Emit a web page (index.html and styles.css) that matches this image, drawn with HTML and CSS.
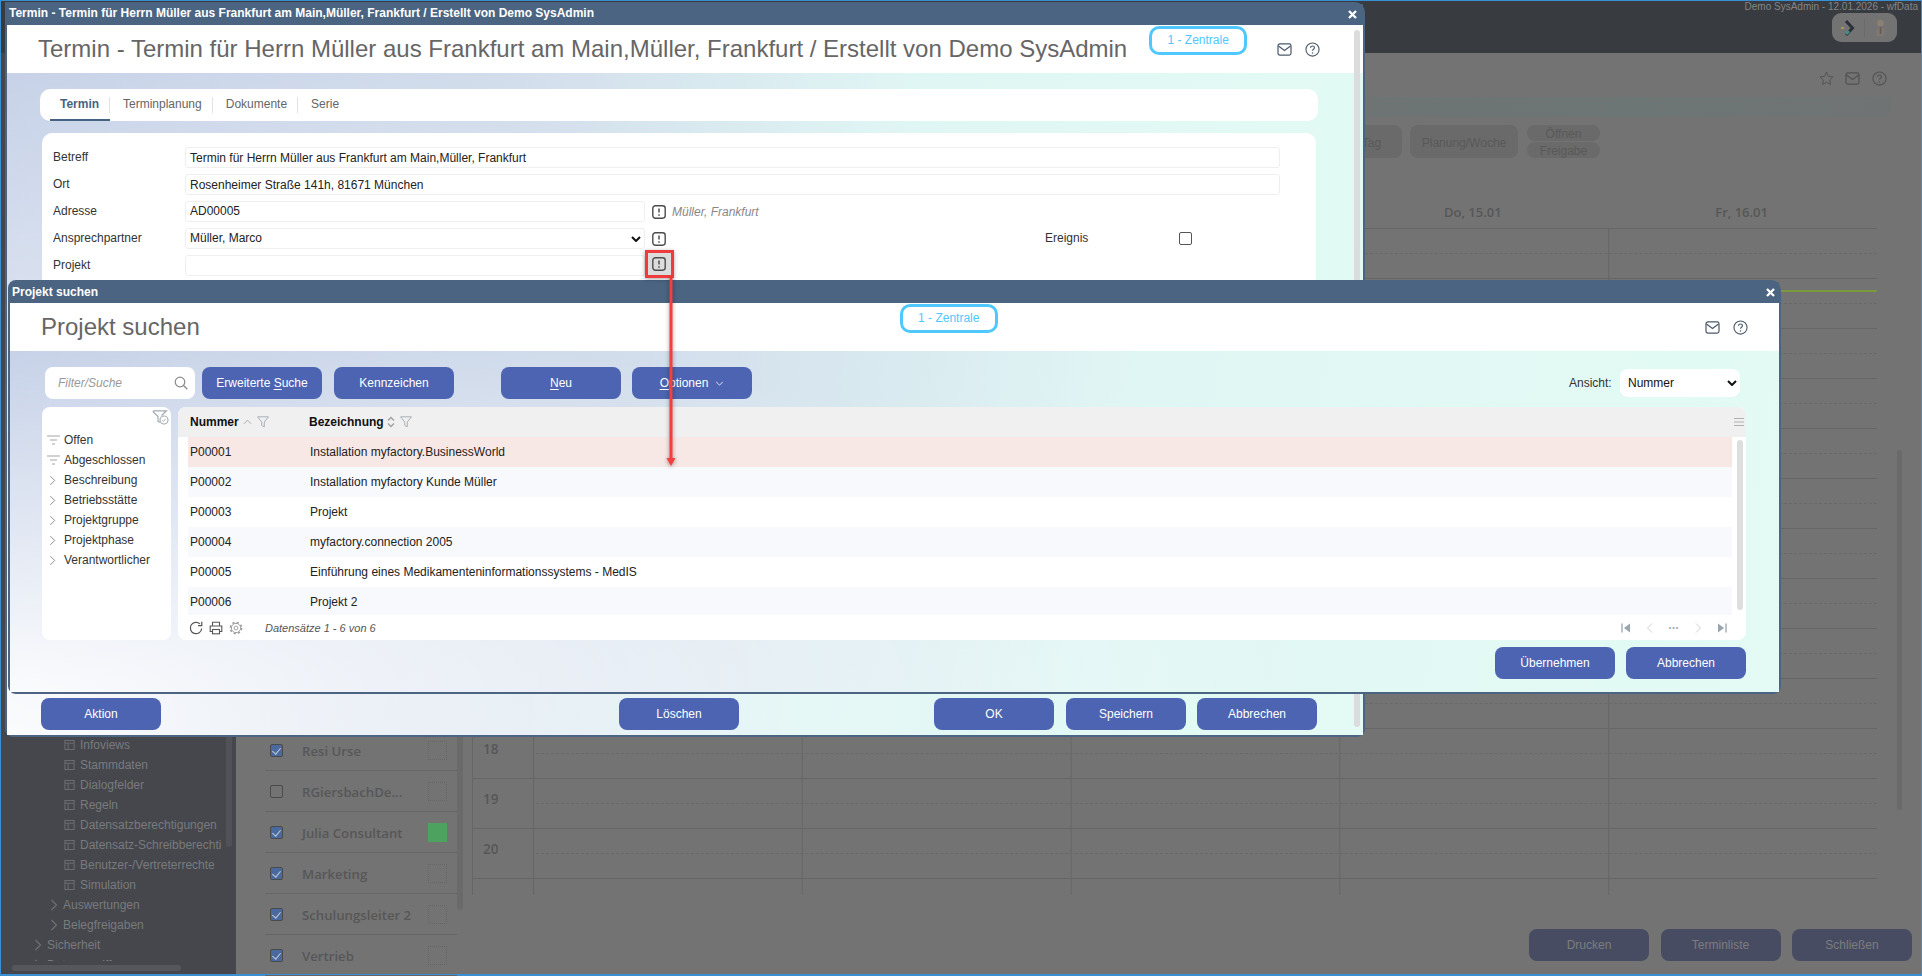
FILE: index.html
```html
<!DOCTYPE html>
<html lang="de">
<head>
<meta charset="utf-8">
<title>Termin</title>
<link rel="stylesheet" href="styles.css">
</head>
<body>
<svg class="sprite" width="0" height="0" aria-hidden="true">
  <symbol id="i-mail" viewBox="0 0 16 14"><rect x="1" y="1" width="14" height="12" rx="2" fill="none" stroke="currentColor" stroke-width="1.3"/><path d="M1.5 3.2 8 8l6.5-4.8" fill="none" stroke="currentColor" stroke-width="1.3"/></symbol>
  <symbol id="i-help" viewBox="0 0 16 16"><circle cx="8" cy="8" r="7" fill="none" stroke="currentColor" stroke-width="1.2"/><path d="M5.9 6.2c0-1.2 1-2 2.1-2s2.1.8 2.1 1.9c0 1.6-2.1 1.7-2.1 3.3" fill="none" stroke="currentColor" stroke-width="1.2"/><circle cx="8" cy="11.6" r=".8" fill="currentColor"/></symbol>
  <symbol id="i-pick" viewBox="0 0 14 14"><rect x=".8" y=".8" width="12.4" height="12.4" rx="2.6" fill="none" stroke="currentColor" stroke-width="1.4"/><path d="M7 3.4v4.2M7 9.2v1.5" stroke="currentColor" stroke-width="1.5"/></symbol>
  <symbol id="i-lines" viewBox="0 0 13 10"><path d="M0 1h13M3 5h7M5 9h3" stroke="currentColor" stroke-width="1.5" fill="none"/></symbol>
  <symbol id="i-chev" viewBox="0 0 8 12"><path d="M1.5 1 6.5 6l-5 5" fill="none" stroke="currentColor" stroke-width="1.1"/></symbol>
  <symbol id="i-funnel" viewBox="0 0 12 12"><path d="M.6.8h10.8L7.3 6v4.8L4.7 9.4V6z" fill="none" stroke="currentColor" stroke-width=".9"/></symbol>
  <symbol id="i-table" viewBox="0 0 12 12"><rect x="1" y="1" width="10" height="10" fill="none" stroke="currentColor"/><path d="M1 4h10M4.5 4v7" stroke="currentColor" fill="none"/></symbol>
  <symbol id="i-close" viewBox="0 0 9 9"><path d="M1 1l7 7M8 1l-7 7" stroke="currentColor" stroke-width="2.3" fill="none"/></symbol>
</svg>

<div class="app">
  <header class="topbar">
    <div class="session">Demo SysAdmin - 12.01.2026 - wfData</div>
    <div class="widget">
      <svg class="widget-logo" viewBox="0 0 20 20"><path d="M7 3l6.5 7L7 17" fill="none" stroke="#2c3036" stroke-width="3"/><path d="M2 10h3" stroke="#a89a3a" stroke-width="2"/><path d="M7 16l3-3" stroke="#3f8f8a" stroke-width="3"/></svg>
      <span class="widget-sep"></span>
      <svg class="widget-user" viewBox="0 0 16 24"><circle cx="8" cy="6" r="4" fill="#8c8073"/><path d="M3 22v-7c0-3 2-4 5-4s5 1 5 4v7z" fill="#7f7872"/><path d="M7 11h2v8H7z" fill="#655a55"/></svg>
    </div>
  </header>

  <div class="main">
    <aside class="sidebar">
      <div class="tree">
        <div class="tree-item lvl3"><svg class="tree-ico"><use href="#i-table"/></svg>Infoviews</div>
        <div class="tree-item lvl3"><svg class="tree-ico"><use href="#i-table"/></svg>Stammdaten</div>
        <div class="tree-item lvl3"><svg class="tree-ico"><use href="#i-table"/></svg>Dialogfelder</div>
        <div class="tree-item lvl3"><svg class="tree-ico"><use href="#i-table"/></svg>Regeln</div>
        <div class="tree-item lvl3"><svg class="tree-ico"><use href="#i-table"/></svg>Datensatzberechtigungen</div>
        <div class="tree-item lvl3"><svg class="tree-ico"><use href="#i-table"/></svg>Datensatz-Schreibberechtigungen</div>
        <div class="tree-item lvl3"><svg class="tree-ico"><use href="#i-table"/></svg>Benutzer-/Vertreterrechte</div>
        <div class="tree-item lvl3"><svg class="tree-ico"><use href="#i-table"/></svg>Simulation</div>
        <div class="tree-item lvl2"><svg class="tree-chev"><use href="#i-chev"/></svg>Auswertungen</div>
        <div class="tree-item lvl2"><svg class="tree-chev"><use href="#i-chev"/></svg>Belegfreigaben</div>
        <div class="tree-item lvl1"><svg class="tree-chev"><use href="#i-chev"/></svg>Sicherheit</div>
        <div class="tree-item lvl1"><svg class="tree-chev"><use href="#i-chev"/></svg>Datenzugriff</div>
      </div>
      <div class="sb-v"></div>
      <div class="sb-h"><span></span></div>
    </aside>

    <section class="content">
      <div class="page-icons">
        <svg class="pi-star" viewBox="0 0 16 16"><path d="M8 1.2l2.1 4.5 4.8.6-3.5 3.3.9 4.8L8 12.1l-4.3 2.3.9-4.8L1.1 6.3l4.8-.6z" fill="none" stroke="currentColor"/></svg>
        <svg class="pi-mail"><use href="#i-mail"/></svg>
        <svg class="pi-help"><use href="#i-help"/></svg>
      </div>
      <div class="strip"></div>
      <div class="tools">
        <button class="tool t-tag">Tag</button>
        <button class="tool t-plan">Planung/Woche</button>
        <div class="tool-stack">
          <button class="tool small">Öffnen</button>
          <button class="tool small">Freigabe</button>
        </div>
      </div>
      <div class="days">
        <div class="day">Do, 15.01</div>
        <div class="day">Fr, 16.01</div>
      </div>
      <div class="planner">
        <div class="people">
          <div class="person"><span class="chk on"></span><span class="pname">Resi Urse</span><span class="swatch"></span></div>
          <div class="person"><span class="chk"></span><span class="pname">RGiersbachDe...</span><span class="swatch"></span></div>
          <div class="person"><span class="chk on"></span><span class="pname">Julia Consultant</span><span class="swatch green"></span></div>
          <div class="person"><span class="chk on"></span><span class="pname">Marketing</span><span class="swatch"></span></div>
          <div class="person"><span class="chk on"></span><span class="pname">Schulungsleiter 2</span><span class="swatch"></span></div>
          <div class="person"><span class="chk on"></span><span class="pname">Vertrieb</span><span class="swatch"></span></div>
        </div>
        <div class="people-sb"></div>
        <div class="cal">
          <div class="now"></div>
          <div class="hr"></div><div class="hr"></div><div class="hr"></div><div class="hr"></div><div class="hr"></div>
          <div class="hr"></div><div class="hr"></div><div class="hr"></div><div class="hr"></div><div class="hr"></div>
          <div class="hr"><span>18</span></div><div class="hr"><span>19</span></div><div class="hr"><span>20</span></div>
        </div>
        <div class="cal-sb"></div>
      </div>
      <div class="page-actions">
        <button class="page-btn">Drucken</button>
        <button class="page-btn">Terminliste</button>
        <button class="page-btn">Schließen</button>
      </div>
    </section>
  </div>
</div>

<!-- Termin dialog -->
<div class="dlg dlg-termin">
  <div class="dlg-title"><span>Termin - Termin für Herrn Müller aus Frankfurt am Main,Müller, Frankfurt / Erstellt von Demo SysAdmin</span><svg class="dlg-x"><use href="#i-close"/></svg></div>
  <div class="dlg-head">
    <h1>Termin - Termin für Herrn Müller aus Frankfurt am Main,Müller, Frankfurt / Erstellt von Demo SysAdmin</h1>
    <div class="badge">1 - Zentrale</div>
    <div class="head-icons"><svg class="hi-mail"><use href="#i-mail"/></svg><svg class="hi-help"><use href="#i-help"/></svg></div>
  </div>
  <div class="dlg-body">
    <nav class="tabs">
      <a class="tab active">Termin</a>
      <a class="tab">Terminplanung</a>
      <a class="tab">Dokumente</a>
      <a class="tab last">Serie</a>
    </nav>
    <div class="form">
      <div class="row"><label>Betreff</label><div class="field wide">Termin für Herrn Müller aus Frankfurt am Main,Müller, Frankfurt</div></div>
      <div class="row"><label>Ort</label><div class="field wide">Rosenheimer Straße 141h, 81671 München</div></div>
      <div class="row"><label>Adresse</label><div class="field">AD00005</div><svg class="pick"><use href="#i-pick"/></svg><em class="hint">Müller, Frankfurt</em></div>
      <div class="row"><label>Ansprechpartner</label><div class="field sel">Müller, Marco<svg class="sel-arrow" viewBox="0 0 10 6"><path d="M1 1l4 4 4-4" fill="none" stroke="#111" stroke-width="2"/></svg></div><svg class="pick"><use href="#i-pick"/></svg><span class="ev-label">Ereignis</span><span class="ev-check"></span></div>
      <div class="row"><label>Projekt</label><div class="field"></div><svg class="pick"><use href="#i-pick"/></svg></div>
    </div>
    <div class="dlg-actions">
      <button class="btn">Aktion</button>
      <button class="btn a-del">Löschen</button>
      <button class="btn a-ok">OK</button>
      <button class="btn a-save">Speichern</button>
      <button class="btn">Abbrechen</button>
    </div>
  </div>
  <div class="dlg-scroll"></div>
</div>

<!-- Projekt suchen dialog -->
<div class="dlg dlg-projekt">
  <div class="dlg-title"><span>Projekt suchen</span><svg class="dlg-x"><use href="#i-close"/></svg></div>
  <div class="dlg-head">
    <h1>Projekt suchen</h1>
    <div class="badge">1 - Zentrale</div>
    <div class="head-icons"><svg class="hi-mail"><use href="#i-mail"/></svg><svg class="hi-help"><use href="#i-help"/></svg></div>
  </div>
  <div class="dlg-body">
    <div class="toolbar">
      <div class="search"><em>Filter/Suche</em><svg viewBox="0 0 14 14"><circle cx="6" cy="6" r="4.8" fill="none" stroke="currentColor" stroke-width="1.2"/><path d="M9.5 9.5l3.8 3.8" stroke="currentColor" stroke-width="1.3"/></svg></div>
      <button class="btn">Erweiterte <u>S</u>uche</button>
      <button class="btn b-kenn">Kennzeichen</button>
      <button class="btn b-neu"><u>N</u>eu</button>
      <button class="btn b-opt"><u>O</u>ptionen<svg class="opt-chev" viewBox="0 0 10 6"><path d="M1 1l4 4 4-4" fill="none" stroke="currentColor"/></svg></button>
      <label class="view-label">Ansicht:</label>
      <div class="view-select">Nummer<svg viewBox="0 0 10 6"><path d="M1 1l4 4 4-4" fill="none" stroke="#111" stroke-width="2"/></svg></div>
    </div>
    <div class="panels">
      <div class="facets">
        <svg class="facet-top" viewBox="0 0 17 15"><path d="M1.5.8h13l-5 4.7M1.5.8c-.6.6-.4 1 .1 1.5L6 6.500v4.700l1.800 1.200" fill="none" stroke="#a2abb3" stroke-width="1.2"/><circle cx="12" cy="10" r="4" fill="none" stroke="#a2abb3" stroke-width="1.1"/><path d="M10.200 10.300l1.300 1.200 2.200-2.700" fill="none" stroke="#a2abb3" stroke-width=".9"/></svg>
        <div class="facet"><svg class="f-lines"><use href="#i-lines"/></svg>Offen</div>
        <div class="facet"><svg class="f-lines"><use href="#i-lines"/></svg>Abgeschlossen</div>
        <div class="facet"><svg class="f-chev"><use href="#i-chev"/></svg>Beschreibung</div>
        <div class="facet"><svg class="f-chev"><use href="#i-chev"/></svg>Betriebsstätte</div>
        <div class="facet"><svg class="f-chev"><use href="#i-chev"/></svg>Projektgruppe</div>
        <div class="facet"><svg class="f-chev"><use href="#i-chev"/></svg>Projektphase</div>
        <div class="facet"><svg class="f-chev"><use href="#i-chev"/></svg>Verantwortlicher</div>
      </div>
      <div class="grid">
        <div class="grid-head">
          <div class="gh gh-num">Nummer<svg class="sort" viewBox="0 0 10 6"><path d="M1 5l4-4 4 4" fill="none" stroke="currentColor"/></svg><svg class="gh-f"><use href="#i-funnel"/></svg></div>
          <div class="gh">Bezeichnung<svg class="sort2" viewBox="0 0 8 12"><path d="M1 4.5 4 1.5l3 3M1 7.5l3 3 3-3" fill="none" stroke="currentColor" stroke-width="1.3"/></svg><svg class="gh-f"><use href="#i-funnel"/></svg></div>
          <svg class="gh-menu" viewBox="0 0 10 8"><path d="M0 .5h10M0 4h10M0 7.5h10" stroke="currentColor" fill="none"/></svg>
        </div>
        <div class="grid-body">
          <div class="rows">
            <div class="gr sel"><span>P00001</span><span>Installation myfactory.BusinessWorld</span></div>
            <div class="gr alt"><span>P00002</span><span>Installation myfactory Kunde Müller</span></div>
            <div class="gr"><span>P00003</span><span>Projekt</span></div>
            <div class="gr alt"><span>P00004</span><span>myfactory.connection 2005</span></div>
            <div class="gr"><span>P00005</span><span>Einführung eines Medikamenteninformationssystems - MedIS</span></div>
            <div class="gr alt last"><span>P00006</span><span>Projekt 2</span></div>
          </div>
          <div class="grid-sb"><span></span></div>
        </div>
        <div class="grid-foot">
          <svg class="gf" viewBox="0 0 14 14"><path d="M12.7 7.5a5.7 5.7 0 1 1-1.700-4.600" fill="none" stroke="currentColor" stroke-width="1.2"/><path d="M12.8.8v3.800H9" fill="none" stroke="currentColor" stroke-width="1.2"/></svg>
          <svg class="gf" viewBox="0 0 14 14"><path d="M3.5 5V1.200h7V5M3.500 10.500H1.200V5h11.600v5.500h-2.300" fill="none" stroke="currentColor" stroke-width="1.1"/><rect x="3.5" y="8.500" width="7" height="4.300" fill="none" stroke="currentColor" stroke-width="1.1"/></svg>
          <svg class="gf lite" viewBox="0 0 14 14"><circle cx="7" cy="7" r="5.600" fill="none" stroke="currentColor" stroke-width="1.5" stroke-dasharray="2.200 2.200"/><circle cx="7" cy="7" r="4.600" fill="none" stroke="currentColor" stroke-width=".9"/><circle cx="7" cy="7" r="1.900" fill="none" stroke="currentColor" stroke-width=".9"/></svg>
          <em class="gf-count">Datensätze 1 - 6 von 6</em>
          <div class="pager">
            <svg viewBox="0 0 10 10"><path d="M1 .5v9" stroke="currentColor" stroke-width="1.3"/><path d="M9 .5v9L3 5z" fill="currentColor"/></svg>
            <svg class="pg-light" viewBox="0 0 10 10"><path d="M7 .5 2.500 5 7 9.500" fill="none" stroke="currentColor"/></svg>
            <span>•••</span>
            <svg class="pg-light" viewBox="0 0 10 10"><path d="M3 .5 7.500 5 3 9.500" fill="none" stroke="currentColor"/></svg>
            <svg viewBox="0 0 10 10"><path d="M9 .5v9" stroke="currentColor" stroke-width="1.3"/><path d="M1 .5v9L7 5z" fill="currentColor"/></svg>
          </div>
        </div>
      </div>
    </div>
    <div class="dlg-actions right">
      <button class="btn">Übernehmen</button>
      <button class="btn">Abbrechen</button>
    </div>
  </div>
</div>

<!-- Annotation drawn over the screenshot -->
<div class="mark-box"><svg class="pick"><use href="#i-pick"/></svg></div>
<svg class="mark-arrow" viewBox="0 0 16 192"><path d="M8 0v184" stroke="#f43f3f" stroke-width="3" fill="none"/><path d="M3.500 180h9L8 188z" fill="#f43f3f"/></svg>
</body>
</html>
```

FILE: styles.css
```css
* { box-sizing: border-box; }
html, body { margin: 0; padding: 0; }
body {
  position: relative;
  width: 1922px;
  height: 976px;
  overflow: hidden;
  font-family: "Liberation Sans", Arial, sans-serif;
  font-size: 12px;
  background: #737373;
  color: #222;
}
button { font-family: inherit; border: 0; padding: 0; }
.sprite { position: absolute; }

/* Background application (dimmed) */
.app {
  height: 976px;
  display: flex;
  flex-direction: column;
  border: 1px solid #3a8fd3;
  border-width: 1px 1px 2px;
}
.topbar {
  height: 52px;
  flex: none;
  background: #383b40;
  display: flex;
  flex-direction: column;
  align-items: flex-end;
  padding: 0 3px 0 0;
}
.session { color: #858585; font-size: 10px; line-height: 12px; }
.widget {
  width: 65px;
  height: 29px;
  margin: 0 21px 0 0;
  border-radius: 9px;
  background: #737373;
  display: flex;
  align-items: center;
  padding-left: 7px;
}
.widget-logo { width: 20px; height: 20px; }
.widget-sep { width: 1px; height: 20px; background: #6c6c6c; margin: 0 8px 0 5px; }
.widget-user { width: 15px; height: 20px; }
.main { flex: 1; display: flex; min-height: 0; }
.sidebar {
  width: 235px;
  flex: none;
  background: #45474c;
  display: flex;
  flex-direction: column;
  justify-content: flex-end;
  position: relative;
  overflow: hidden;
}
.tree { height: 240px; flex: none; margin-bottom: -1px; overflow: hidden; color: #797a7d; font-size: 12px; }
.tree-item { height: 20px; line-height: 20px; white-space: nowrap; display: flex; align-items: center; overflow: hidden; }
.lvl3 { padding-left: 63px; width: 221px; }
.lvl2 { padding-left: 49px; }
.lvl1 { padding-left: 33px; }
.tree-ico { width: 11px; height: 12px; margin-right: 5px; flex: none; color: #707174; }
.tree-chev { width: 8px; height: 12px; margin-right: 5px; flex: none; color: #707174; }
.sb-v { position: absolute; left: 225px; top: 0; bottom: 127px; width: 6px; background: #505257; border-radius: 3px; }
.sb-h { position: absolute; left: 0; right: 0; bottom: 0; height: 13px; background: #45474c; padding: 4px 0 0 11px; }
.sb-h span { display: block; width: 169px; height: 6px; background: #55575c; border-radius: 3px; }

.content { flex: 1; min-width: 0; display: flex; flex-direction: column; position: relative; color: #5a5a5a; }
.page-icons { height: 44px; flex: none; display: flex; justify-content: flex-end; align-items: center; padding: 6px 34px 0 0; color: #525252; }
.pi-star { width: 15px; height: 15px; margin-right: 11px; }
.pi-mail { width: 15px; height: 13px; margin-right: 12px; }
.pi-help { width: 15px; height: 15px; }
.strip { height: 20px; flex: none; margin: 0 30px 0 0; background: linear-gradient(90deg, #727272 0%, #6f7272 50%, #6c7675 85%, #707373 100%); }
.tools { flex: none; display: flex; margin: 8px 0 0 1105px; gap: 8px; height: 33px; }
.tool { background: #6a6a6a; color: #595959; border-radius: 8px; font-size: 12px; padding-top: 2px; }
.t-tag { width: 61px; }
.t-plan { width: 108px; }
.tool-stack { display: flex; flex-direction: column; justify-content: space-between; width: 73px; margin-left: 1px; }
.tool.small { height: 16px; border-radius: 8px; font-size: 12px; line-height: 16px; padding-top: 1px; }
.days { flex: none; display: flex; justify-content: flex-end; height: 70px; padding-right: 45px; font-size: 13px; font-family: "Open Sans", sans-serif; font-weight: 600; color: #575757; }
.day { width: 268.8px; padding-top: 45px; text-align: center; }
.planner { flex: 1; min-height: 0; display: flex; padding-left: 29px; position: relative; }
.people { width: 192px; flex: none; padding-top: 502px; }
.person { height: 41px; border-bottom: 1px solid #666; display: flex; align-items: center; padding-left: 5px; }
.chk { width: 13px; height: 13px; border: 1px solid #4a4a4a; border-radius: 2px; flex: none; }
.chk.on { background: #4a6a9f; position: relative; }
.chk.on::after { content: ""; position: absolute; left: 3px; top: 1px; width: 4px; height: 7px; border: solid #c4cad8; border-width: 0 1.5px 1.5px 0; transform: rotate(40deg); }
.pname { flex: 1; margin-left: 19px; padding-top: 1px; font-family: "Open Sans", sans-serif; font-weight: 600; font-size: 13.2px; color: #575757; white-space: nowrap; }
.swatch { width: 19px; height: 19px; margin-right: 10px; border: 1px dotted #666; flex: none; }
.swatch.green { background: #4ea260; border-color: #4ea260; }
.people-sb { width: 6px; flex: none; height: 682px; background: #6a6a6a; border-radius: 3px; }
.cal {
  width: 1405px;
  height: 667px;
  flex: none;
  margin-left: 9px;
  border-left: 1px solid #666;
  border-top: 1px solid #666;
  position: relative;
  overflow: hidden;
  background-image: linear-gradient(to right, #666 1px, transparent 1px);
  background-size: 268.8px 100%;
  background-position: 60px 0;
}
.hr { height: 50px; border-bottom: 1px solid #666; position: relative; font-family: "Open Sans", sans-serif; font-weight: 600; font-size: 13.5px; color: #575757; padding: 11px 0 0 10px; }
.hr::after { content: ""; position: absolute; left: 63px; right: 0; top: 24px; border-top: 1px dashed #696969; }
.now { position: absolute; left: 1134px; right: 0; top: 61px; height: 2px; background: #7a993d; }
.cal-sb { position: absolute; left: 1661px; top: 222px; width: 5px; height: 360px; background: #6a6a6a; border-radius: 3px; }
.page-actions { position: absolute; right: 9px; bottom: 13px; display: flex; gap: 11.5px; }
.page-btn { width: 120px; height: 32px; border-radius: 8px; background: #474c63; color: #7d7d7d; font-size: 12px; }

/* Dialogs */
.dlg {
  position: absolute;
  display: flex;
  flex-direction: column;
  border: 2px solid #4a6482;
  border-radius: 0 10px 8px 8px;
  background: #fff;
}
.dlg-termin { left: 5px; top: 2px; width: 1360px; height: 735px; }
.dlg-projekt { left: 8px; top: 280px; width: 1773px; height: 414px; border-radius: 8px 10px 8px 8px; }
.dlg-title {
  height: 21px;
  flex: none;
  background: #4a6482;
  color: #fff;
  font-weight: 700;
  font-size: 12px;
  line-height: 19px;
  display: flex;
  justify-content: space-between;
  align-items: flex-start;
  padding: 0 2px;
}
.dlg-projekt .dlg-title { line-height: 21px; }
.dlg-x { width: 9px; height: 9px; margin: 6px 4px 0 0; color: #fff; flex: none; }
.dlg-projekt .dlg-x { margin: 6px 2px 0 0; }
.dlg-head { height: 48px; flex: none; display: flex; background: #fff; }
.dlg-head h1 { margin: 0; font-weight: 400; font-size: 24px; line-height: 48px; color: #666; white-space: nowrap; padding-left: 31px; }
.badge {
  width: 98px;
  height: 29px;
  margin-top: 1px;
  border: 3px solid #4fc8ff;
  border-radius: 10px;
  color: #4fc8ff;
  font-size: 12px;
  line-height: 23px;
  text-align: center;
}
.dlg-termin .badge { margin-left: 22px; }
.dlg-projekt .badge { margin-left: 700px; }
.head-icons { margin-left: auto; display: flex; align-items: center; color: #4a5a6a; gap: 13px; }
.dlg-termin .head-icons { padding-right: 43px; }
.dlg-projekt .head-icons { padding-right: 31px; }
.hi-mail { width: 15px; height: 13px; }
.hi-help { width: 15px; height: 15px; }
.dlg-body {
  flex: 1;
  min-height: 0;
  display: flex;
  flex-direction: column;
  background:
    radial-gradient(ellipse 75% 110% at 0% 100%, rgba(255,255,255,.92), rgba(255,255,255,.45) 50%, rgba(255,255,255,0) 100%),
    linear-gradient(100deg, #c2cee6 0%, #d3deec 35%, #e0f6f4 62%, #e3fbf4 100%);
}
.btn {
  width: 120px;
  height: 32px;
  flex: none;
  border-radius: 8px;
  background: #4c64b1;
  color: #fff;
  font-size: 12px;
  text-align: center;
}
.btn u { text-underline-offset: 2px; }

/* Termin dialog body */
.dlg-termin .dlg-body { padding: 16px 45px 5px 33px; }
.tabs { height: 32px; flex: none; background: #fff; border-radius: 10px; display: flex; align-items: center; padding-left: 10px; color: #666; }
.tab { height: 32px; line-height: 30px; padding: 0 11px 0 13px; position: relative; }
.tab::after { content: ""; position: absolute; right: 0; top: 8px; height: 16px; width: 1px; background: #e3e3e3; }
.tab.last::after { display: none; }
.tab.active { color: #466482; font-weight: 700; padding: 0 10px; width: 60px; border-bottom: 2px solid #466482; }
.form { flex: 1; min-height: 0; margin: 12px 2px 11px; padding: 14px 11px 0; background: #fff; border-radius: 10px; }
.row { height: 21px; margin-bottom: 6px; display: flex; align-items: center; }
.row label { width: 132px; flex: none; color: #333; padding-bottom: 2px; }
.field { width: 460px; height: 21px; flex: none; border: 1px solid #efefef; border-radius: 3px; line-height: 19px; padding-left: 4px; color: #222; background: #fff; position: relative; }
.field.wide { width: 1095px; line-height: 20px; }
.sel-arrow { position: absolute; right: 3px; top: 7px; width: 10px; height: 6px; }
.pick { width: 14px; height: 14px; color: #4c4c4c; margin-left: 7px; flex: none; }
.hint { margin-left: 6px; color: #888; }
.ev-label { margin-left: 379px; width: 134px; color: #333; padding-bottom: 2px; }
.ev-check { width: 13px; height: 13px; border: 1px solid #555; border-radius: 2px; }
.dlg-actions { display: flex; flex: none; height: 32px; gap: 11px; margin-left: 1px; }
.a-del { margin-left: 447px; }
.a-ok { margin-left: 184px; }
.a-save { margin-left: 1px; }
.dlg-scroll { position: absolute; right: 3px; top: 26px; height: 697px; width: 6px; background: #dcdcdc; border-radius: 3px; }

/* Projekt dialog body */
.dlg-projekt .dlg-body { padding: 16px 33px 0 32px; }
.toolbar { height: 32px; flex: none; display: flex; align-items: center; margin-left: 3px; }
.search { width: 150px; height: 32px; background: #fff; border-radius: 8px; display: flex; align-items: center; justify-content: space-between; padding: 0 7px 0 13px; color: #999; }
.search svg { width: 14px; height: 14px; color: #8a8a8a; }
.toolbar .btn:first-of-type { margin-left: 7px; }
.b-kenn { margin-left: 12px; }
.b-neu { margin-left: 47px; }
.b-opt { margin-left: 11px; }
.opt-chev { width: 9px; height: 5px; margin-left: 7px; vertical-align: 1px; }
.view-label { margin-left: auto; color: #333; width: 51px; }
.view-select { width: 120px; height: 28px; margin-right: 6px; background: #fff; border-radius: 8px; display: flex; justify-content: space-between; align-items: center; padding: 0 3px 0 8px; color: #111; }
.view-select svg { width: 10px; height: 6px; }
.panels { height: 233px; flex: none; margin-top: 8px; display: flex; gap: 7px; }
.facets { width: 129px; flex: none; background: #fff; border-radius: 8px; padding-top: 23px; position: relative; }
.facet-top { position: absolute; right: 2px; top: 3px; width: 17px; height: 15px; }
.facet { height: 20px; display: flex; align-items: center; padding-left: 5px; color: #333; }
.f-lines { width: 13px; height: 10px; margin-right: 4px; color: #c4c4c4; flex: none; }
.f-chev { width: 7px; height: 11px; margin: 0 8px 0 2px; color: #8a8a8a; flex: none; }
.grid { flex: 1; min-width: 0; background: #fff; border-radius: 8px; display: flex; flex-direction: column; overflow: hidden; }
.grid-head { height: 30px; flex: none; background: #f0f0f0; display: flex; align-items: center; padding-left: 12px; color: #111; font-weight: 700; position: relative; }
.gh { display: flex; align-items: center; }
.gh-num { width: 119px; }
.sort { width: 9px; height: 6px; margin-left: 4px; color: #a4a4a4; }
.sort2 { width: 8px; height: 12px; margin-left: 3px; color: #a0a0a0; }
.gh-f { width: 12px; height: 12px; margin-left: 5px; color: #a0a9b0; }
.gh-menu { position: absolute; right: 2px; top: 11px; width: 10px; height: 8px; color: #b0b0b0; }
.grid-body { flex: none; height: 178px; display: flex; }
.rows { width: 1554px; margin-left: 0; flex: none; padding-left: 10px; }
.gr { height: 30px; display: flex; align-items: center; padding-left: 2px; color: #222; }
.gr.last { height: 28px; padding-top: 2px; }
.gr span:first-child { width: 120px; }
.gr.sel { background: #f8e8e5; }
.gr.alt { background: #f8f9fc; }
.grid-sb { flex: 1; padding: 3px 3px 5px 5px; }
.grid-sb span { display: block; height: 100%; background: #dedede; border-radius: 3px; }
.grid-foot { flex: 1; display: flex; align-items: center; padding-left: 11px; color: #555; }
.gf { width: 14px; height: 14px; margin-right: 6px; }
.gf.lite { color: #999; }
.gf-count { margin-left: 16px; font-size: 11px; color: #555; }
.pager { margin-left: auto; margin-right: 12px; display: flex; align-items: center; color: #9aa5ad; }
.pager svg { width: 24px; height: 10px; }
.pager span { width: 24px; text-align: center; font-size: 7px; letter-spacing: 1px; }
.pg-light { color: #ccd2d6; }
.dlg-actions.right { justify-content: flex-end; margin: 7px 0 0; }

/* Red annotation */
.mark-box { position: absolute; left: 645px; top: 250px; width: 29px; height: 28px; border: 3px solid #ef3b3b; background: #dcdcdc; box-shadow: 0 1px 4px rgba(0,0,0,.35); display: flex; align-items: center; justify-content: center; }
.mark-box .pick { margin: 0 1px 0 0; }
.mark-arrow { position: absolute; left: 663px; top: 278px; width: 16px; height: 192px; filter: drop-shadow(0 1px 2px rgba(0,0,0,.4)); }
```
